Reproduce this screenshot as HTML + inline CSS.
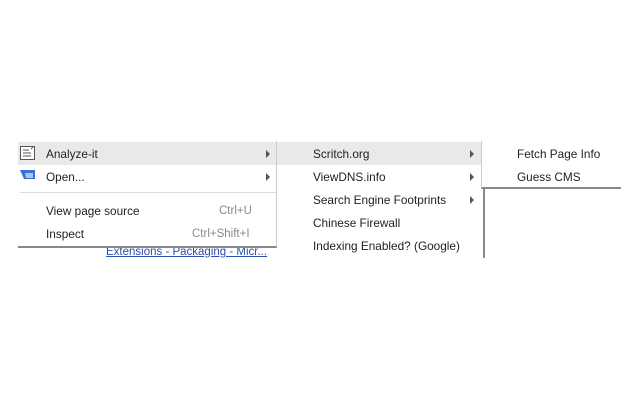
<!DOCTYPE html>
<html><head><style>
body{margin:0;width:640px;height:400px;background:#fff;position:relative;overflow:hidden;font-family:"Liberation Sans",sans-serif;font-size:11.8px;color:#222}
.m{position:absolute;background:#fff}
.r{position:absolute;height:23px;line-height:25px;white-space:nowrap}
.hl{background:#e9e9e9}
.arr{position:absolute;width:0;height:0;border-top:4px solid transparent;border-bottom:4px solid transparent;border-left:4px solid #555}
.sc{position:absolute;color:#888;font-size:11.5px}
</style></head><body>
<div style="position:absolute;left:106px;top:246px;color:#2a4fb0;text-decoration:underline;font-size:11.5px">Extensions - Packaging - Micr...</div>
<!-- menu1 -->
<div class="m" style="left:18px;top:141px;width:258px;height:105px;border-right:1px solid #ccc;border-bottom:2px solid #888"></div>
<div class="hl" style="position:absolute;left:18px;top:142px;width:258px;height:23px"></div>
<div class="r" style="left:46px;top:142px">Analyze-it</div>
<div class="r" style="left:46px;top:165px">Open...</div>
<div style="position:absolute;left:20px;top:192px;width:256px;height:1px;background:#ddd"></div>
<div class="r" style="left:46px;top:199px">View page source</div>
<div class="r" style="left:46px;top:222px">Inspect</div>
<div class="sc" style="left:219px;top:205px">Ctrl+U</div>
<div class="sc" style="left:192px;top:228px">Ctrl+Shift+I</div>
<div class="arr" style="left:266px;top:150px"></div>
<div class="arr" style="left:266px;top:173px"></div>
<svg style="position:absolute;left:20px;top:146px" width="16" height="15"><rect x="0.5" y="0.5" width="14" height="13" fill="#fff" stroke="#555"/><path d="M3 4h6M3 7h8M3 10h8" stroke="#555"/><path d="M11 3l2-2" stroke="#555"/></svg>
<svg style="position:absolute;left:20px;top:170px" width="16" height="10"><path d="M0 0h15v9H4z" fill="#3a6fd8"/><path d="M5 3h8v5H6z" fill="#a9c4f0"/></svg>
<!-- menu2 -->
<div class="m" style="left:277px;top:141px;width:206px;height:117px;border-right:2px solid #888"></div>
<div class="hl" style="position:absolute;left:277px;top:142px;width:206px;height:23px"></div>
<div class="r" style="left:313px;top:142px">Scritch.org</div>
<div class="r" style="left:313px;top:165px">ViewDNS.info</div>
<div class="r" style="left:313px;top:188px">Search Engine Footprints</div>
<div class="r" style="left:313px;top:211px">Chinese Firewall</div>
<div class="r" style="left:313px;top:234px">Indexing Enabled? (Google)</div>
<div class="arr" style="left:470px;top:150px"></div>
<div class="arr" style="left:470px;top:173px"></div>
<div class="arr" style="left:470px;top:196px"></div>
<!-- menu3 -->
<div class="m" style="left:481px;top:141px;width:139px;height:46px;border-left:1px solid #ccc;border-bottom:2px solid #888"></div>
<div class="r" style="left:517px;top:142px">Fetch Page Info</div>
<div class="r" style="left:517px;top:165px">Guess CMS</div>
</body></html>
